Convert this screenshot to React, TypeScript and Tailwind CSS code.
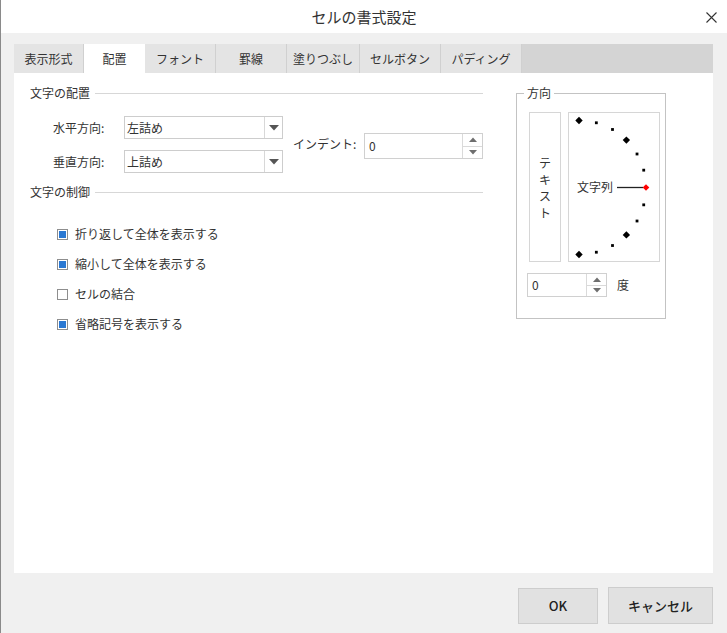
import React from 'react';

const FONT = "font-['Noto_Sans_CJK_JP','Noto_Sans',sans-serif]";

function DownTri({ color = '#555' }: { color?: string }) {
  return (
    <svg width="10" height="6" viewBox="0 0 10 6">
      <path d="M0 0H10L5 5.5Z" fill={color} />
    </svg>
  );
}

function UpTri() {
  return (
    <svg width="8" height="5" viewBox="0 0 8 5">
      <path d="M0 5H8L4 0.5Z" fill="#6e6e6e" />
    </svg>
  );
}

function SmallDownTri() {
  return (
    <svg width="8" height="5" viewBox="0 0 8 5">
      <path d="M0 0H8L4 4.5Z" fill="#6e6e6e" />
    </svg>
  );
}

function SectionHeader({ label, className = '' }: { label: string; className?: string }) {
  return (
    <div className={`flex items-center h-[16px] ${className}`}>
      <span className="text-[12px] leading-[16px] text-[#333]">{label}</span>
      <div className="flex-1 ml-[5px] h-px bg-[#d7d7d7]" />
    </div>
  );
}

function SelectRow({ label, value }: { label: string; value: string }) {
  return (
    <div className="flex items-center">
      <span className="w-[71px] text-[12px] leading-[16px] text-[#333]">{label}</span>
      <div className="w-[159px] h-[23px] flex border border-[#cdcdcd] bg-white">
        <div className="flex-1 flex items-center pl-[2px] text-[12px] leading-[16px] text-[#333]">{value}</div>
        <div className="w-[18px] border-l border-[#d8d8d8] flex items-center justify-center">
          <DownTri />
        </div>
      </div>
    </div>
  );
}

function SpinButtons() {
  return (
    <div className="w-[20px] border-l border-[#dadada] flex flex-col">
      <div className="flex-1 flex items-center justify-center border-b border-[#dadada]">
        <UpTri />
      </div>
      <div className="flex-1 flex items-center justify-center">
        <SmallDownTri />
      </div>
    </div>
  );
}

function Check({ checked, label }: { checked: boolean; label: string }) {
  return (
    <div className="flex items-center h-[30px]">
      <div className="w-[11px] h-[11px] border border-[#8e8e8e] bg-white p-[1px]">
        {checked && <div className="w-full h-full bg-[#2a78d2]" />}
      </div>
      <span className="ml-[7px] text-[12px] leading-[16px] text-[#333]">{label}</span>
    </div>
  );
}

function Dial() {
  const cx = 10;
  const cy = 74.5;
  const r = 67;
  const marks: React.ReactNode[] = [];
  for (let i = 0; i <= 12; i++) {
    const a = 90 - i * 15;
    const rad = (a * Math.PI) / 180;
    const x = cx + r * Math.cos(rad);
    const y = cy - r * Math.sin(rad);
    if (a === 0) {
      const h = 3.3;
      marks.push(
        <polygon key={i} points={`${x},${y - h} ${x + h},${y} ${x},${y + h} ${x - h},${y}`} fill="#ff0000" />
      );
    } else if (a % 45 === 0) {
      const h = 3.7;
      marks.push(
        <polygon key={i} points={`${x},${y - h} ${x + h},${y} ${x},${y + h} ${x - h},${y}`} fill="#000" />
      );
    } else {
      marks.push(<rect key={i} x={x - 1.4} y={y - 1.4} width={2.8} height={2.8} fill="#000" />);
    }
  }
  return (
    <svg width="90" height="148" viewBox="0 0 90 148">
      <text x="8" y="79" fontSize="12" fill="#333" fontFamily="Noto Sans CJK JP, sans-serif">
        文字列
      </text>
      <line x1="48" y1="74.5" x2="74" y2="74.5" stroke="#222" strokeWidth="1.3" />
      {marks}
    </svg>
  );
}

export default function App() {
  const tabs = [
    { label: '表示形式', w: 'w-[70px]', active: false },
    { label: '配置', w: 'w-[61px]', active: true },
    { label: 'フォント', w: 'w-[71px]', active: false },
    { label: '罫線', w: 'w-[71px]', active: false },
    { label: '塗りつぶし', w: 'w-[73px]', active: false },
    { label: 'セルボタン', w: 'w-[81px]', active: false },
    { label: 'パディング', w: 'w-[81px]', active: false },
  ];

  return (
    <div className={`w-[727px] h-[633px] bg-[#f0f0f0] border-l border-[#8a8a8a] flex flex-col ${FONT}`}>
      {/* Title bar */}
      <div className="h-[33px] bg-white grid grid-cols-[1fr_auto_1fr] items-center">
        <div />
        <div className="text-[15px] leading-[20px] text-[#333] pt-[1px]">セルの書式設定</div>
        <div className="flex justify-end pr-[10px] pt-[2px]">
          <svg width="11" height="11" viewBox="0 0 11 11">
            <path d="M0.5 0.5L10.5 10.5M10.5 0.5L0.5 10.5" stroke="#333" strokeWidth="1.1" />
          </svg>
        </div>
      </div>

      {/* Tabs */}
      <div className="mt-[11px] ml-[13px] mr-[14px] flex h-[29px]">
        {tabs.map((t) => (
          <div
            key={t.label}
            className={`${t.w} flex items-center justify-center text-[12px] leading-[16px] text-[#333] ${
              t.active ? 'bg-white' : 'bg-[#e4e4e4] border-r border-[#d0d0d0]'
            }`}
          >
            {t.label}
          </div>
        ))}
        <div className="flex-1 bg-[#d4d4d4]" />
      </div>

      {/* Content panel */}
      <div className="ml-[13px] mr-[14px] h-[500px] bg-white flex pt-[12px] pl-[16px]">
        <div className="w-[453px] flex flex-col">
          <SectionHeader label="文字の配置" />
          <div className="flex mt-[15px] pl-[23px]">
            <div className="flex flex-col gap-[11px]">
              <SelectRow label="水平方向:" value="左詰め" />
              <SelectRow label="垂直方向:" value="上詰め" />
            </div>
            <span className="self-center ml-[10px] w-[71px] text-[12px] leading-[16px] text-[#333] mt-[-2px]">
              インデント:
            </span>
            <div className="self-center mt-[3px] w-[119px] h-[26px] flex border border-[#d0d0d0] bg-white">
              <div className="flex-1 flex items-center pl-[4px] text-[12px] leading-[16px] text-[#333]">0</div>
              <SpinButtons />
            </div>
          </div>
          <SectionHeader label="文字の制御" className="mt-[11px]" />
          <div className="mt-[19px] pl-[27px] flex flex-col">
            <Check checked label="折り返して全体を表示する" />
            <Check checked label="縮小して全体を表示する" />
            <Check checked={false} label="セルの結合" />
            <Check checked label="省略記号を表示する" />
          </div>
        </div>

        {/* Orientation group */}
        <div className="ml-[33px] mt-[8px] w-[150px] h-[226px] border border-[#c3c3c3] relative pt-[18px] pl-[10px]">
          <span className="absolute left-[7px] -top-[9px] bg-white px-[3px] text-[12px] leading-[16px] text-[#333]">
            方向
          </span>
          <div className="flex gap-[7px] ml-[2px]">
            <div className="w-[32px] h-[150px] border border-[#d6d6d6] flex flex-col items-center justify-center pt-[2px]">
              {['テ', 'キ', 'ス', 'ト'].map((c) => (
                <span key={c} className="text-[12px] leading-[16.5px] text-[#333]">
                  {c}
                </span>
              ))}
            </div>
            <div className="w-[92px] h-[150px] border border-[#d6d6d6]">
              <Dial />
            </div>
          </div>
          <div className="mt-[11px] flex items-center">
            <div className="w-[80px] h-[24px] flex border border-[#d0d0d0] bg-white">
              <div className="flex-1 flex items-center pl-[4px] text-[12px] leading-[16px] text-[#333]">0</div>
              <SpinButtons />
            </div>
            <span className="ml-[10px] text-[12px] leading-[16px] text-[#333]">度</span>
          </div>
        </div>
      </div>

      {/* Footer */}
      <div className="flex justify-end items-start gap-[10px] pt-[14px] pr-[14px]">
        <button className="mt-[1px] w-[80px] h-[36px] bg-[#e1e1e1] border border-[#cdcdcd] text-[13px] leading-[18px] font-medium text-[#222]">
          OK
        </button>
        <button className="w-[105px] h-[37px] bg-[#e1e1e1] border border-[#cdcdcd] text-[13px] leading-[18px] font-medium text-[#222]">
          キャンセル
        </button>
      </div>
    </div>
  );
}
